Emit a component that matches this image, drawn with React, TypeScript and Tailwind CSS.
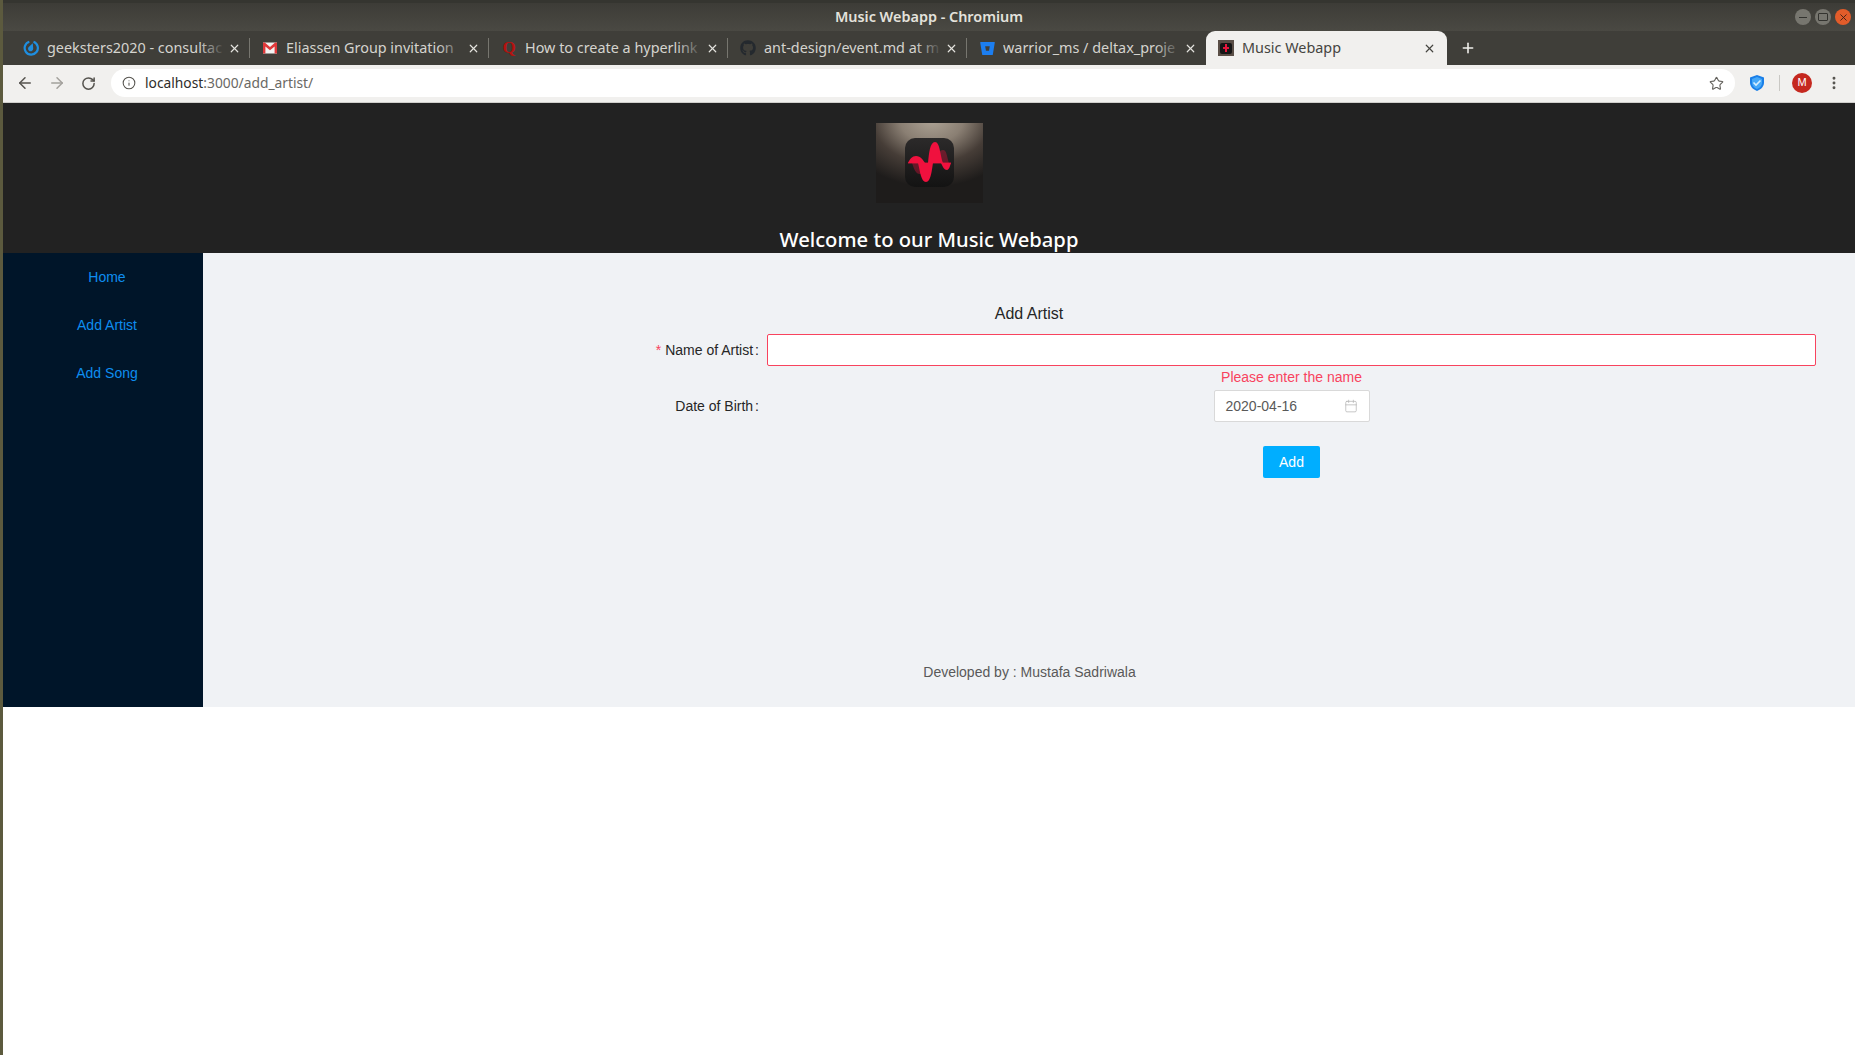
import { ArrowLeft, ArrowRight, Calendar, Info, MoreVertical, Plus, RotateCw, Star, X } from 'lucide-react';
import { FaBitbucket, FaGithub } from 'react-icons/fa';

function Meet() {
  return (
    <svg width="16" height="16" viewBox="0 0 16 16">
      <path d="M10.500 1.800a6.600 6.600 0 1 1-4.200-.1" fill="none" stroke="#1e8ee0" strokeWidth="2.200" />
      <path d="M9.800 3.200l.4 5.300a2.600 2.600 0 1 1-4.200-1.800z" fill="#1e8ee0" />
    </svg>
  );
}

function Gmail() {
  return (
    <svg width="16" height="16" viewBox="0 0 16 16">
      <rect x="1" y="2.500" width="14" height="11" fill="#f2f2f2" />
      <path d="M1 2.500h1.800L8 7l5.200-4.500H15v11h-2.400V6.500L8 10.300 3.400 6.500v7H1z" fill="#e0383a" />
    </svg>
  );
}

function Quora() {
  return <span className="w-4 text-center font-['Liberation_Serif',serif] text-[17px] font-bold leading-4 text-[#b5120f]">Q</span>;
}

function Favicon() {
  return (
    <svg width="16" height="16" viewBox="0 0 16 16">
      <rect width="16" height="16" fill="#5a4e46" />
      <rect x="2" y="3" width="12" height="11" rx="2" fill="#161616" />
      <path d="M8 4v8M5 8h6" stroke="#e8163c" strokeWidth="2" />
    </svg>
  );
}

const tabs = [
  { title: 'geeksters2020 - consultac', icon: <Meet /> },
  { title: 'Eliassen Group invitation', icon: <Gmail /> },
  { title: 'How to create a hyperlink', icon: <Quora /> },
  { title: 'ant-design/event.md at m', icon: <FaGithub size={16} color="#24292e" /> },
  { title: 'warrior_ms / deltax_proje', icon: <FaBitbucket size={15} color="#1c7ef0" /> },
];

function Logo() {
  return (
    <svg width="107" height="80" viewBox="0 0 107 80">
      <defs>
        <radialGradient id="glow" cx="0.52" cy="-0.05" r="0.85">
          <stop offset="0" stopColor="#aea496" />
          <stop offset="0.35" stopColor="#8a7f73" />
          <stop offset="0.65" stopColor="#463d37" />
          <stop offset="1" stopColor="#1e1c1b" />
        </radialGradient>
        <linearGradient id="tile" x1="0" y1="0" x2="0" y2="1">
          <stop offset="0" stopColor="#2c2a2a" />
          <stop offset="1" stopColor="#131313" />
        </linearGradient>
      </defs>
      <rect width="107" height="80" fill="url(#glow)" />
      <rect x="29" y="15" width="49" height="49" rx="10" fill="url(#tile)" />
      {/* faded echoes of the wave */}
      <path d="M60 40C62 30 63 27 67 27C71 27 71 35 73 40Z" fill="#f0113e" opacity="0.35" />
      <path d="M36 40C38 46 40 52 45 51C49 50 49 44 50 40Z" fill="#f0113e" opacity="0.35" />
      {/* main wave */}
      <path d="M32 40C34 36 36 33 40 33C45 33 47 37 49 40Z" fill="#f0113e" />
      <path d="M42 40C44 48 45 59 50 59C55 59 56 46 57 40Z" fill="#f0113e" />
      <path d="M52 40C53 30 54 19 59 19C64 19 64 32 67 40Z" fill="#f0113e" />
      <path d="M65 40C67 44 68 47 71 47C73 47 74 43 75 40Z" fill="#f0113e" />
      <path d="M32 40H75" stroke="#f0113e" strokeWidth="0.8" />
    </svg>
  );
}

export default function App() {
  return (
    <div className="flex min-h-[1055px] bg-white font-['Liberation_Sans',sans-serif] text-sm">
      <div className="w-[3px] shrink-0 bg-[#5c5a3e]" />
      <div className="flex-1">
        {/* Window title */}
        <div className="relative flex h-[31px] items-center justify-center border-t-[3px] border-[#353530] bg-gradient-to-b from-[#3d3c37] to-[#4a4943]">
          <span className="font-['Noto_Sans',sans-serif] text-[14.400px] font-semibold text-[#e4e2dc]">Music Webapp - Chromium</span>
          <div className="absolute right-[4px] top-[6px] flex gap-1">
            <div className="flex h-4 w-4 items-center justify-center rounded-full bg-[#77766f]"><div className="h-[1px] w-2 bg-[#33332f]" /></div>
            <div className="flex h-4 w-4 items-center justify-center rounded-full bg-[#77766f]"><div className="h-[8px] w-[10px] rounded-[1px] border border-[#33332f]" /></div>
            <div className="flex h-4 w-4 items-center justify-center rounded-full bg-[#e25c2a]"><X size={11} color="#3a2015" strokeWidth={2} /></div>
          </div>
        </div>

        {/* Tab strip */}
        <div className="flex h-[34px] items-center bg-[#3f3e39] pl-[8px]">
          {tabs.map((tab, i) => (
            <div key={tab.title} className="relative flex h-full w-[239px] items-center font-['Noto_Sans',sans-serif] text-[14.400px] text-[#d5d4cf]">
              <div className="flex w-9 justify-center pl-[4px]">{tab.icon}</div>
              <span className="w-[176px] overflow-hidden whitespace-nowrap">{tab.title}</span>
              <div className="pointer-events-none absolute left-[188px] top-0 h-full w-[26px] bg-gradient-to-r from-transparent to-[#3f3e39]" />
              <X size={13} strokeWidth={2.200} className="absolute left-[217px] text-[#e4e3de]" />
              {i < 4 && <div className="absolute right-0 h-[20px] w-px bg-[#77766f]" />}
            </div>
          ))}
          <div className="relative flex h-full w-[241px] items-center rounded-t-[9px] bg-[#f1f0ee] font-['Noto_Sans',sans-serif] text-[14.400px] text-[#45443f]">
            <div className="flex w-9 justify-center pl-[4px]"><Favicon /></div>
            <span>Music Webapp</span>
            <X size={13} strokeWidth={2.200} className="absolute left-[217px] text-[#45443f]" />
          </div>
          <Plus size={16} strokeWidth={2.400} className="ml-[13px] text-[#f0efeb]" />
        </div>

        {/* Toolbar */}
        <div className="flex h-[38px] items-center border-b border-[#d0cfcc] bg-[#f1f0ee] pb-[1px] pl-[13px] pr-[10px]">
          <ArrowLeft size={18} strokeWidth={2} className="text-[#55534e]" />
          <ArrowRight size={18} strokeWidth={2} className="ml-[14px] text-[#a3a19c]" />
          <RotateCw size={15} strokeWidth={2.400} className="ml-[15px] text-[#55534e]" />
          <div className="ml-[15px] flex h-[28px] w-[1624px] items-center rounded-full bg-white pl-[11px] pr-[11px]">
            <Info size={14} strokeWidth={1.800} className="text-[#55534e]" />
            <span className="ml-[9px] font-['Noto_Sans',sans-serif] text-[13.800px] text-[#2e2d2a]">localhost<span className="text-[#6a6964]">:3000/add_artist/</span></span>
            <Star size={15} strokeWidth={1.800} className="ml-auto text-[#65635e]" />
          </div>
          <svg width="16" height="18" viewBox="0 0 16 18" className="ml-[14px]">
            <path d="M8 1l7 2.600v5c0 4-3 7-7 8.400-4-1.400-7-4.400-7-8.400v-5z" fill="#1a7fe8" />
            <path d="M8 3l5 1.900v3.900c0 3-2 5.200-5 6.300-3-1.100-5-3.300-5-6.300V4.900z" fill="#46a8f8" />
            <path d="M4.500 8.500l2.500 2.500 4.500-4.500" fill="none" stroke="#d6eeff" strokeWidth="1.600" />
          </svg>
          <div className="ml-[14px] h-4 w-px bg-[#c9c8c4]" />
          <div className="ml-[12px] flex h-5 w-5 items-center justify-center rounded-full bg-[#c5281f] text-[11px] text-white">M</div>
          <MoreVertical size={16} strokeWidth={2.400} className="ml-[14px] text-[#55534e]" />
        </div>

        {/* Page */}
        <header className="flex h-[150px] flex-col items-center bg-[#222222] pt-[20px]">
          <Logo />
          <h1 className="mt-[23px] font-['Noto_Sans',sans-serif] text-[20.200px] font-medium leading-[27px] text-white">Welcome to our Music Webapp</h1>
        </header>
        <div className="flex h-[454px]">
          <aside className="flex w-[200px] flex-col gap-2 bg-[#001529] pl-[8px] pt-[4px] text-[#0e8ef0]">
            <div className="flex h-10 items-center justify-center">Home</div>
            <div className="flex h-10 items-center justify-center">Add Artist</div>
            <div className="flex h-10 items-center justify-center">Add Song</div>
          </aside>
          <main className="flex flex-1 flex-col bg-[#f0f2f5] pt-[49px]">
            <h2 className="text-center text-base leading-6 text-[#262626]">Add Artist</h2>
            <form className="mt-[8px] grid grid-cols-[556px_1049px] gap-x-2 text-[#262626]">
              <label className="flex h-8 items-center justify-end"><span className="mr-1 text-[#f8435e]">*</span>Name of Artist<span className="ml-[2px]">:</span></label>
              <input className="h-8 rounded-[2px] border border-[#f8435e] bg-white outline-none" />
              <div className="col-start-2 h-6 text-center leading-[23px] text-[#f8435e]">Please enter the name</div>
              <label className="flex h-8 items-center justify-end">Date of Birth<span className="ml-[2px]">:</span></label>
              <div className="flex justify-center">
                <div className="flex h-8 w-[156px] items-center justify-between rounded-[2px] border border-[#d9d9d9] bg-white pl-[11px] pr-[11px] text-[#595959]">
                  2020-04-16
                  <Calendar size={14} strokeWidth={1.200} className="text-[#b0b0b0]" />
                </div>
              </div>
              <div className="col-start-2 mt-6 flex justify-center">
                <button type="button" className="h-8 w-[57px] rounded-[2px] bg-[#00aeff] text-white">Add</button>
              </div>
            </form>
            <footer className="mt-auto pb-[24px] pl-[1px] text-center leading-[22px] text-[#595959]">Developed by : Mustafa Sadriwala</footer>
          </main>
        </div>
      </div>
    </div>
  );
}
